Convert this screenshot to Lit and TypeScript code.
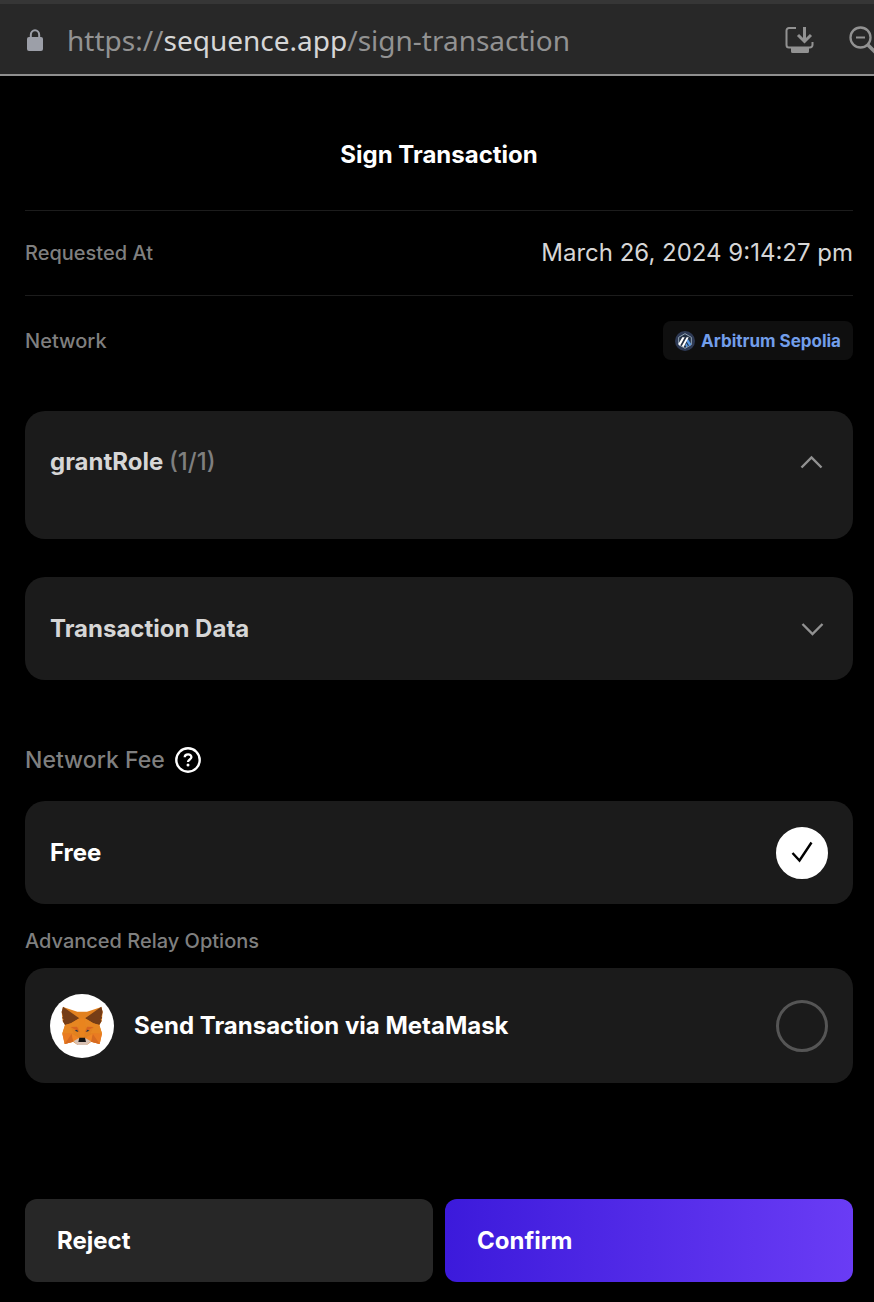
import { LitElement, html, css } from "lit";
import { customElement, state } from "lit/decorators.js";

const arrow = (up: boolean) => html`
  <svg class="chevron" viewBox="0 0 24 24" aria-hidden="true">
    <path d=${up ? "M1.500 17.500 L11.500 7.500 L21.500 17.500" : "M2.500 7 L12.500 17 L22.500 7"} fill="none" stroke="#929292" stroke-width="2.400" />
  </svg>
`;

const arbitrum = html`
  <svg class="chain" viewBox="0 0 60 60" aria-hidden="true">
    <circle cx="30" cy="30" r="30" fill="#2e3a55" />
    <path d="M30 8 L49 19 V41 L30 52 L11 41 V19 Z" fill="#233044" stroke="#91a3b3" stroke-width="3" />
    <path d="M34 31 L38 23 L49 40 L43 45 Z" fill="#5b9ce8" />
    <path d="M10 39 L22 19 H29 L15 44 Z M20 46 L35 19 H41 L26 48 Z" fill="#fff" />
    <path d="M31 42 L34 37 L39 45 L34 49 Z" fill="#5b9ce8" />
  </svg>
`;

const fox = html`
  <svg class="fox" viewBox="90 99 192 192" aria-hidden="true">
    <circle cx="186" cy="195" r="96" fill="#fff" />
    <path d="M129 138 L172 152 H201 L244 138 L248 153 L245 180 L238 192 L246 217 L239 249 L214 242 L200 252 H173 L159 242 L134 249 L127 217 L135 192 L128 180 L125 153 Z" fill="#e2811f" />
    <path d="M129 137 L178 172 L153 187 L135 192 L128 180 L131 175 L126 171 L129 167 L125 153 Z M244 137 L195 172 L220 187 L238 192 L245 180 L242 175 L247 171 L244 167 L248 153 Z" fill="#763d16" />
    <path d="M135 192 L153 187 L178 172 L182 193 L170 200 L152 198 L162 217 L127 218 Z M238 192 L220 187 L195 172 L191 193 L203 200 L221 198 L211 217 L246 218 Z" fill="#e78621" />
    <path d="M180 172 H193 L197 199 L192 233 H181 L176 199 Z" fill="#e9841e" />
    <path d="M152 198 L171 197 L179 214 Z M221 198 L202 197 L194 214 Z" fill="#d86420" />
    <path d="M127 218 L155 217 L160 242 L134 249 Z M246 218 L218 217 L213 242 L239 249 Z" fill="#e97b22" />
    <path d="M155 218 L160 242 L134 249 Z M218 218 L213 242 L239 249 Z" fill="#d66a20" />
    <path d="M155 218 L178 231 L160 242 Z M218 218 L195 231 L213 242 Z" fill="#ef8424" />
    <path d="M160 241 L176 232 H197 L213 241 L200 252 H173 Z" fill="#d8c1b3" />
    <path d="M178 230 H195 L198 243 H175 Z" fill="#161616" />
    <path d="M164 209 L171 206 L175 213 Z M209 209 L202 206 L198 213 Z" fill="#233447" />
  </svg>
`;

@customElement("app-root")
export class AppRoot extends LitElement {
  @state() private relay = "free";
  @state() private callOpen = true;
  @state() private dataOpen = false;

  static styles = css`
    :host {
      display: block;
      min-height: 100vh;
      background: #000;
      color: #fff;
      font: 500 24px/32px Inter, "Liberation Sans", sans-serif;
    }
    * { box-sizing: border-box; }
    svg { display: block; flex: none; }
    .bar {
      display: flex;
      align-items: center;
      height: 76px;
      padding: 2px 0 0 26px;
      border-top: 4px solid #363636;
      border-bottom: 2px solid #8f8f8f;
      background: #282828;
    }
    .lock { width: 18px; height: 24px; }
    .url {
      flex: 1;
      min-width: 0;
      margin-left: 23px;
      overflow: hidden;
      white-space: nowrap;
      font: 400 28px/40px "Noto Sans", "Open Sans", sans-serif;
      color: #929292;
    }
    .host { color: #d6d6d6; }
    .tool {
      padding: 0;
      border: 0;
      background: none;
    }
    .install { width: 30px; height: 30px; }
    .zoom { width: 26px; height: 30px; margin-left: 34px; }
    main { padding: 0 21px 20px 25px; }
    h1 {
      margin: 0;
      padding: 63px 0 39px;
      font-size: 24px;
      font-weight: 700;
      line-height: 32px;
      text-align: center;
    }
    dl { margin: 0; }
    .row {
      display: flex;
      align-items: center;
      justify-content: space-between;
      min-height: 85px;
      border-top: 1px solid #1c1c1c;
    }
    dt { font-size: 20px; color: #7f7f7f; }
    dd { margin: 0; font-weight: 400; color: #d6d6d6; }
    .row .badge {
      display: flex;
      align-items: center;
      gap: 6px;
      height: 39px;
      padding: 0 12px;
      border-radius: 8px;
      background: #0f0f0f;
      color: #729eea;
      font-size: 17px;
      font-weight: 700;
    }
    .row.network { min-height: 90px; }
    .chain { width: 20px; height: 20px; }
    .card {
      display: flex;
      align-items: center;
      width: 100%;
      border: 0;
      border-radius: 20px;
      padding: 0 25px;
      background: #1b1b1b;
      color: #fff;
      font: inherit;
      font-weight: 700;
      text-align: left;
    }
    .call, .data { justify-content: space-between; color: #d6d6d6; padding-right: 29px; }
    .call { min-height: 128px; padding-bottom: 26px; margin-top: 26px; }
    .data { min-height: 103px; margin-top: 38px; }
    .count { color: #7f7f7f; font-weight: 500; }
    .chevron { width: 24px; height: 24px; }
    .fee {
      display: flex;
      align-items: center;
      gap: 10px;
      margin: 64px 0 25px;
      color: #7f7f7f;
      font-size: 23px;
      font-weight: 500;
      line-height: 32px;
    }
    .help { padding: 0; border: 0; background: none; }
    .help svg { width: 26px; height: 26px; }
    fieldset { margin: 0; padding: 0; border: 0; min-width: 0; }
    .free { min-height: 103px; }
    .wallet { min-height: 115px; gap: 20px; }
    .fox { width: 64px; height: 64px; }
    .grow { flex: 1; }
    .advanced {
      margin: 21px 0 11px;
      color: #7f7f7f;
      font-size: 20px;
      line-height: 32px;
    }
    .mark { display: grid; }
    .mark > * { grid-area: 1 / 1; }
    .mark svg { width: 52px; height: 52px; visibility: hidden; pointer-events: none; }
    input {
      appearance: none;
      width: 52px;
      height: 52px;
      margin: 0;
      border: 3px solid #555;
      border-radius: 50%;
    }
    input:checked { border-color: #fff; background: #fff; }
    input:checked + svg { visibility: visible; }
    .actions {
      display: grid;
      grid-template-columns: 1fr 1fr;
      gap: 12px;
      margin-top: 116px;
    }
    .action {
      min-height: 83px;
      padding: 0 32px;
      border: 0;
      border-radius: 12px;
      background: #272727;
      color: #fff;
      font: inherit;
      font-weight: 700;
      text-align: left;
    }
    .confirm { background: linear-gradient(90deg, #3c1adb, #6a3cf5); }
  `;

  private option(value: string) {
    return html`
      <span class="mark">
        <input id=${value} type="radio" name="relay" .checked=${this.relay === value} @change=${() => (this.relay = value)} />
        <svg viewBox="0 0 52 52" aria-hidden="true">
          <path d="M16.500 26 L23.500 33.500 L35.500 15.500" fill="none" stroke="#000" stroke-width="2.400" />
        </svg>
      </span>
    `;
  }

  render() {
    return html`
      <header class="bar">
        <svg class="lock" viewBox="0 0 18 24" aria-hidden="true">
          <path d="M4.800 11 V7 a4.200 4.800 0 0 1 8.400 0 V11" fill="none" stroke="#9c9fa8" stroke-width="2" />
          <rect x="1" y="9" width="16" height="14" rx="2" fill="#9c9fa8" />
        </svg>
        <div class="url">https://<span class="host">sequence.app</span>/sign-transaction</div>
        <button class="tool" aria-label="Install app">
          <svg class="install" viewBox="0 0 30 30">
            <g fill="none" stroke="#929292">
              <path d="M12 3 H5 a2.500 2.500 0 0 0 -2.500 2.500 V20 a2.500 2.500 0 0 0 2.500 2.500 H26 a2.500 2.500 0 0 0 2.500 -2.500 V17" stroke-width="2" />
              <path d="M20.500 2 V16 M14 10 L20.500 16.500 L27 10" stroke-width="3" />
            </g>
            <path d="M7 22 H25 V26.500 a1.500 1.500 0 0 1 -1.500 1.500 H8.500 a1.500 1.500 0 0 1 -1.500 -1.500 Z" fill="#929292" />
          </svg>
        </button>
        <button class="tool" aria-label="Zoom out">
          <svg class="zoom" viewBox="0 0 26 30">
            <g fill="none" stroke="#929292">
              <circle cx="12.500" cy="12.500" r="10" stroke-width="2.300" />
              <path d="M8 12.500 H17" stroke-width="2" />
              <path d="M20 20 L28 28" stroke-width="3.500" />
            </g>
          </svg>
        </button>
      </header>
      <main>
        <h1>Sign Transaction</h1>
        <dl>
          <div class="row"><dt>Requested At</dt><dd>March 26, 2024 9:14:27 pm</dd></div>
          <div class="row network"><dt>Network</dt><dd class="badge">${arbitrum}<span>Arbitrum Sepolia</span></dd></div>
        </dl>
        <button class="card call" aria-expanded=${this.callOpen} @click=${() => (this.callOpen = !this.callOpen)}>
          <span>grantRole <span class="count">(1/1)</span></span>${arrow(this.callOpen)}
        </button>
        <button class="card data" aria-expanded=${this.dataOpen} @click=${() => (this.dataOpen = !this.dataOpen)}>
          <span>Transaction Data</span>${arrow(this.dataOpen)}
        </button>
        <h2 class="fee">
          Network Fee
          <button class="help" aria-label="About the network fee">
            <svg viewBox="0 0 26 26">
              <circle cx="13" cy="13" r="11.700" fill="none" stroke="#fff" stroke-width="2.400" />
              <path d="M9.700 10.300 C9.800 6.300 16.600 6.500 16.400 10.300 C16.300 12.500 13 12.500 13 15" fill="none" stroke="#fff" stroke-width="2.300" />
              <circle cx="13" cy="18" r="1.500" fill="#fff" />
            </svg>
          </button>
        </h2>
        <fieldset aria-label="Relay options">
          <label class="card free" for="free"><span class="grow">Free</span>${this.option("free")}</label>
          <div class="advanced">Advanced Relay Options</div>
          <label class="card wallet" for="metamask">
            ${fox}<span class="grow">Send Transaction via MetaMask</span>${this.option("metamask")}
          </label>
        </fieldset>
        <div class="actions">
          <button class="action">Reject</button>
          <button class="action confirm">Confirm</button>
        </div>
      </main>
    `;
  }
}
